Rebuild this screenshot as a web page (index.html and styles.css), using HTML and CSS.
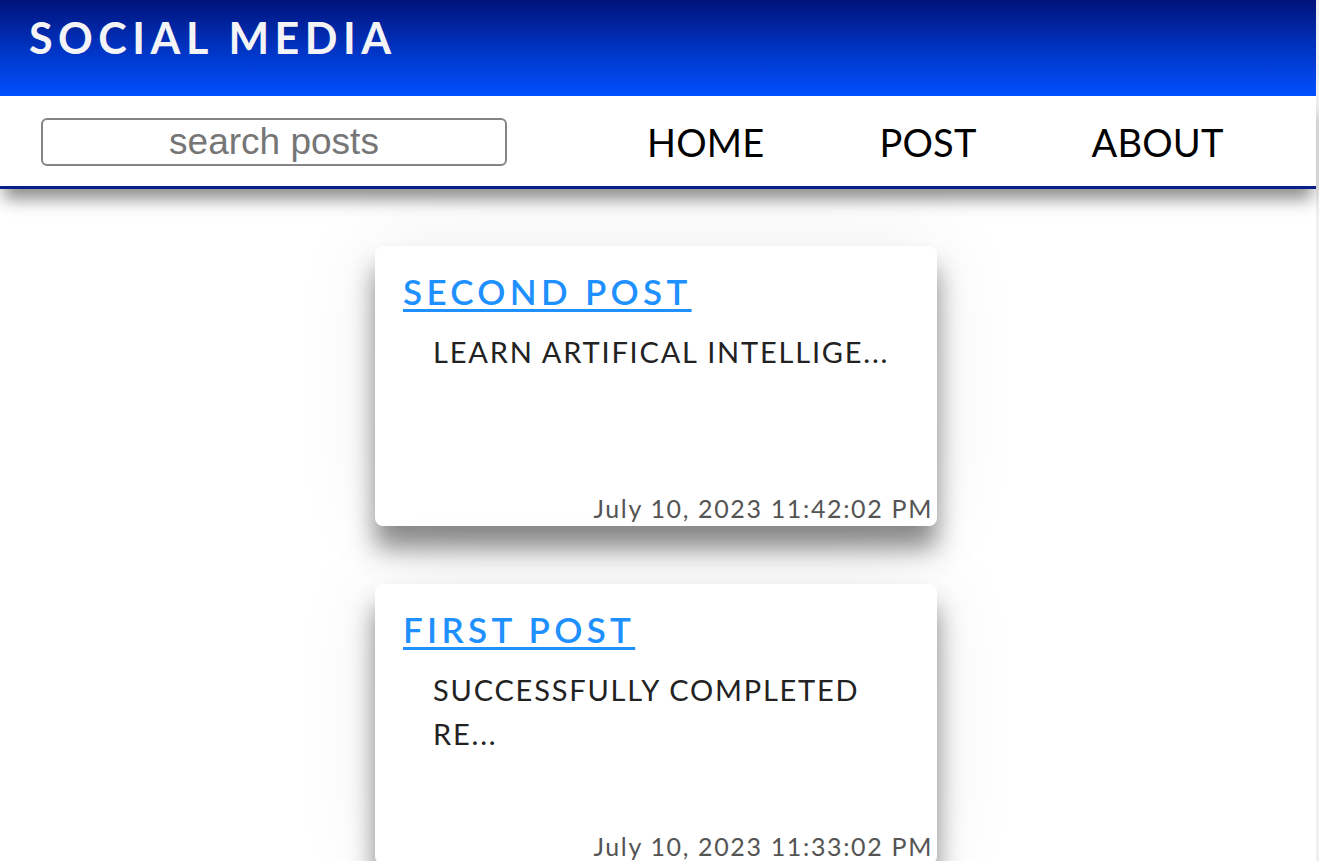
FILE: index.html
```html
<!DOCTYPE html>
<html lang="en">
<head>
<meta charset="utf-8">
<title>Social Media</title>
<link rel="stylesheet" href="styles.css">
</head>
<body>
<div class="page">
  <header class="header">
    <h1 class="brand">SOCIAL MEDIA</h1>
  </header>
  <nav class="nav">
    <form class="search-form">
      <input class="search" type="text" placeholder="search posts">
    </form>
    <ul class="links">
      <li><a href="#">HOME</a></li>
      <li><a href="#">POST</a></li>
      <li><a href="#">ABOUT</a></li>
    </ul>
  </nav>
  <main class="feed">
    <article class="card">
      <h2 class="card-title"><a href="#">SECOND POST</a></h2>
      <p class="card-body">LEARN ARTIFICAL INTELLIGE...</p>
      <p class="card-date">July 10, 2023 11:42:02 PM</p>
    </article>
    <article class="card">
      <h2 class="card-title"><a href="#">FIRST POST</a></h2>
      <p class="card-body">SUCCESSFULLY COMPLETED RE...</p>
      <p class="card-date">July 10, 2023 11:33:02 PM</p>
    </article>
  </main>
</div>
</body>
</html>
```

FILE: styles.css
```css
html {
  background: #efefef;
}
body {
  margin: 0;
  font-family: Lato, "Noto Sans", sans-serif;
  overflow: hidden;
  height: 861px;
}
.page {
  width: 1316px;
  min-height: 861px;
  background: #fff;
}
.header {
  height: 96px;
  background: linear-gradient(to bottom, #00137a 0%, #0036c8 55%, #0050ff 100%);
  display: flex;
  align-items: center;
  padding-left: 29px;
}
.brand {
  margin: -22px 0 0 0;
  color: #f4f4f6;
  font-size: 43px;
  font-weight: 700;
  letter-spacing: 5.5px;
  line-height: 1;
}
.nav {
  height: 90px;
  border-bottom: 3px solid #0a1e8c;
  background: #fff;
  display: flex;
  align-items: center;
  box-shadow: 0 14px 16px -4px rgba(0, 0, 0, 0.45);
  position: relative;
  z-index: 1;
}
.search-form {
  margin: 2px 0 0 41px;
}
.search {
  width: 466px;
  height: 48px;
  box-sizing: border-box;
  border: 2px solid #858585;
  border-radius: 6px;
  font-family: "Liberation Sans", Arial, sans-serif;
  font-size: 37px;
  text-align: center;
  padding: 0;
  color: #333;
  outline: none;
}
.search::placeholder {
  color: #767676;
}
.links {
  list-style: none;
  margin: 2px 0 0 140px;
  padding: 0;
  display: flex;
  gap: 115px;
}
.links a {
  color: #000;
  text-decoration: none;
  font-size: 38px;
  letter-spacing: 0.2px;
  font-weight: 400;
}
.feed {
  padding-top: 57px;
  display: flex;
  flex-direction: column;
  align-items: flex-start;
  padding-left: 375px;
  gap: 58px;
}
.card {
  width: 562px;
  height: 280px;
  box-sizing: border-box;
  background: #fff;
  border-radius: 8px;
  box-shadow: 0 22px 26px rgba(0, 0, 0, 0.45), 0 0 90px rgba(0, 0, 0, 0.07);
  padding: 24px 4px 0 28px;
  display: flex;
  flex-direction: column;
}
.card-title {
  margin: 0;
  font-size: 35px;
  font-weight: 600;
  letter-spacing: 4.3px;
  line-height: 42px;
}
.card-title a {
  color: #1e90ff;
  text-decoration: underline;
  text-decoration-thickness: 3px;
  text-underline-offset: 4px;
}
.card-body {
  margin: 18px 0 0 30px;
  font-size: 29px;
  color: #222;
  letter-spacing: 1.8px;
  line-height: 44px;
  width: 470px;
}
.card-date {
  margin: auto 0 0 0;
  text-align: right;
  font-size: 25px;
  color: #555;
  letter-spacing: 1.65px;
  line-height: 36px;
}
```
